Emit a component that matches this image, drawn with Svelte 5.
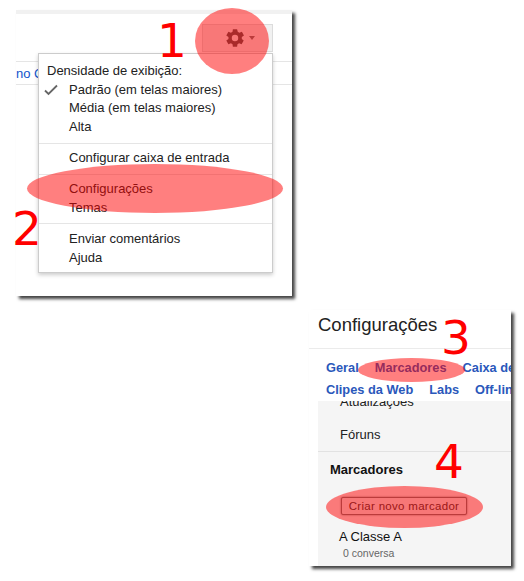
<script lang="ts">
  const density = [
    { label: 'Padrão (em telas maiores)', checked: true },
    { label: 'Média (em telas maiores)', checked: false },
    { label: 'Alta', checked: false },
  ];
  const marks = [
    { n: 1, cls: 'n1' },
    { n: 2, cls: 'n2' },
    { n: 3, cls: 'n3' },
    { n: 4, cls: 'n4' },
  ];
</script>

<div class="page">
  <section class="shot gmail">
    <div class="strip"></div>
    <div class="toolbar">
      <div class="gear-btn">
        <svg class="gear" viewBox="0 0 24 24" width="22" height="22">
          <path fill="#555" fill-rule="evenodd" d="M19.4 13a7.600 7.600 0 0 0 0-2l2.400-1.800-2.300-4-2.800 1.100a7.600 7.600 0 0 0-1.700-1L14.300 2.500H9.700l-.4 2.800a7.600 7.600 0 0 0-1.700 1L4.800 5.200l-2.300 4L4.900 11a7.600 7.600 0 0 0 0 2l-2.400 1.800 2.300 4 2.800-1.100a7.600 7.600 0 0 0 1.700 1l.4 2.800h4.600l.4-2.800a7.600 7.600 0 0 0 1.700-1l2.800 1.100 2.300-4zM12 15.500a3.500 3.500 0 1 1 0-7 3.500 3.500 0 0 1 0 7z"/>
        </svg>
        <span class="caret"></span>
      </div>
    </div>
    <div class="crumb"><span>no C</span></div>

    <div class="menu">
      <p class="head">Densidade de exibição:</p>
      {#each density as d}
        <p class="item">
          {#if d.checked}
            <svg class="check" viewBox="0 0 14 12" width="14" height="12">
              <path d="M1 6.500 4.500 10 13 1.500" fill="none" stroke="#666" stroke-width="1.800"/>
            </svg>
          {/if}
          {d.label}
        </p>
      {/each}
      <hr />
      <p class="item">Configurar caixa de entrada</p>
      <hr />
      <p class="item">Configurações</p>
      <p class="item">Temas</p>
      <hr />
      <p class="item">Enviar comentários</p>
      <p class="item">Ajuda</p>
    </div>
  </section>

  <section class="shot settings">
    <h2>Configurações</h2>
    <nav>
      <div class="tabs"><a href="#g">Geral</a><a href="#m">Marcadores</a><a href="#c">Caixa de entrada</a></div>
      <div class="tabs"><a href="#w">Clipes da Web</a><a href="#l">Labs</a><a href="#o">Off-line</a></div>
    </nav>
    <div class="labels">
      <div class="scroll">
        <p class="row clipped">Atualizações</p>
        <p class="row">Fóruns</p>
      </div>
      <h3>Marcadores</h3>
      <button type="button">Criar novo marcador</button>
      <p class="name">A Classe A</p>
      <p class="count">0 conversa</p>
    </div>
  </section>

  <div class="blob b1"></div>
  <div class="blob b2"></div>
  <div class="blob b3"></div>
  <div class="blob b4"></div>

  {#each marks as m}
    <span class="num {m.cls}">{m.n}</span>
  {/each}
</div>

<style>
  :global(body) {
    margin: 0;
    background: #fff;
  }

  .page {
    position: relative;
    width: 524px;
    height: 581px;
    overflow: hidden;
    font-family: "Liberation Sans", Arial, sans-serif;
    color: #222;
  }

  .shot {
    background: #fff;
    box-shadow: 3px 3px 3px 0 #444;
    overflow: hidden;
  }

  .gmail {
    position: absolute;
    left: 16px;
    top: 10px;
    width: 276px;
    height: 286px;
  }

  .strip {
    height: 4px;
    background: #f1f1f1;
  }

  .toolbar {
    display: flex;
    justify-content: flex-end;
    height: 48px;
    padding-top: 10px;
    padding-right: 19px;
    box-sizing: border-box;
    border-bottom: 1px solid #e5e5e5;
  }

  .gear-btn {
    display: flex;
    align-items: center;
    justify-content: center;
    gap: 3px;
    width: 71px;
    height: 28px;
    padding-left: 4px;
    box-sizing: border-box;
    background: #f1f1f1;
    border: 1px solid #dcdcdc;
  }

  .caret {
    width: 0;
    height: 0;
    border: 3.500px solid transparent;
    border-top: 4px solid #777;
    border-bottom: 0;
  }

  .crumb {
    height: 22px;
    border-bottom: 1px solid #e5e5e5;
    font-size: 13px;
    line-height: 23px;
    color: #15c;
  }

  .menu {
    position: absolute;
    left: 22px;
    top: 43px;
    width: 235px;
    height: 220px;
    padding-top: 8px;
    box-sizing: border-box;
    background: #fff;
    border: 1px solid #ccc;
    box-shadow: 0 2px 4px rgba(0, 0, 0, 0.2);
    font-size: 13px;
  }

  .head {
    margin: 0 0 0 8px;
    line-height: 18.500px;
  }

  .item {
    position: relative;
    margin: 0 0 0 30px;
    line-height: 18.900px;
  }

  .check {
    position: absolute;
    left: -25px;
    top: 3px;
  }

  hr {
    margin: 5.500px 0;
    border: 0;
    border-top: 1px solid #e5e5e5;
  }

  .settings {
    position: absolute;
    left: 309px;
    top: 310px;
    width: 202px;
    height: 256px;
  }

  h2 {
    margin: 0;
    height: 39px;
    padding: 4px 0 0 9px;
    box-sizing: border-box;
    border-bottom: 1px solid #ebebeb;
    font-size: 18.500px;
    font-weight: 400;
    line-height: 22px;
  }

  nav {
    height: 52px;
    padding: 9px 0 0 17px;
    box-sizing: border-box;
  }

  .tabs {
    display: flex;
    gap: 16px;
    height: 21.500px;
    white-space: nowrap;
    font-size: 12.800px;
    font-weight: 700;
    line-height: 20px;
  }

  .tabs a {
    color: #2a58bb;
    text-decoration: none;
  }

  .labels {
    height: 165px;
    margin-left: 9px;
    background: #f5f5f5;
    overflow: hidden;
  }

  .scroll {
    height: 50px;
    border-bottom: 1px solid #e2e2e2;
    overflow: hidden;
  }

  .row {
    margin: 0 0 0 22px;
    font-size: 13px;
    line-height: 18px;
  }

  .clipped {
    margin-top: -8px;
    margin-bottom: 15px;
  }

  h3 {
    margin: 9px 0 0 12px;
    font-size: 13px;
    line-height: 17px;
    color: #111;
  }

  button {
    display: block;
    width: 126px;
    height: 18px;
    margin: 19px 0 0 23px;
    padding: 0;
    background: #eee;
    border: 1px solid #777;
    border-radius: 2px;
    box-shadow: 0 0 2px #666;
    font-family: "Liberation Sans", Arial, sans-serif;
    font-size: 11.500px;
    letter-spacing: 0.300px;
    color: #333;
  }

  .name {
    margin: 14px 0 0 21px;
    font-size: 13px;
    line-height: 16px;
    color: #111;
  }

  .count {
    margin: 1px 0 0 25px;
    font-size: 10.500px;
    line-height: 14px;
    color: #666;
  }

  .blob {
    position: absolute;
    border-radius: 50%;
    background: rgba(255, 0, 0, 0.5);
  }

  .b1 {
    left: 195px;
    top: 8px;
    width: 74px;
    height: 66px;
  }

  .b2 {
    left: 27px;
    top: 164px;
    width: 256px;
    height: 49px;
  }

  .b3 {
    left: 358px;
    top: 358px;
    width: 107px;
    height: 24px;
  }

  .b4 {
    left: 326px;
    top: 486px;
    width: 157px;
    height: 42px;
  }

  .num {
    position: absolute;
    font-family: "DejaVu Sans", sans-serif;
    font-size: 47px;
    line-height: 46px;
    color: #f00;
  }

  .n1 {
    left: 157px;
    top: 18px;
  }

  .n2 {
    left: 12px;
    top: 206px;
  }

  .n3 {
    left: 441px;
    top: 315px;
  }

  .n4 {
    left: 434px;
    top: 439px;
  }
</style>
